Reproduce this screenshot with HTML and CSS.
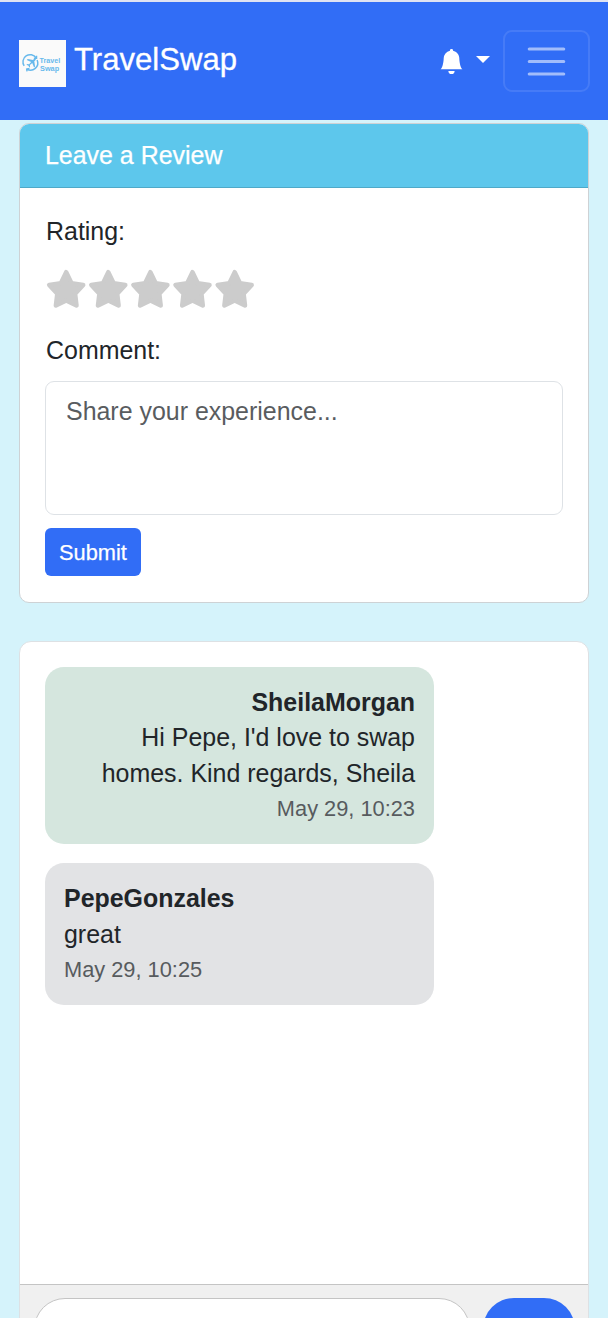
FILE: index.html
```html
<!DOCTYPE html>
<html lang="en">
<head>
<meta charset="utf-8">
<title>TravelSwap</title>
<link rel="stylesheet" href="styles.css">
</head>
<body>
<header class="navbar">
  <a class="brand">
    <svg class="logo" viewBox="0 0 48 48">
      <rect width="48" height="48" fill="#fafafa"/>
      <g fill="none" stroke="#67b9ec" stroke-width="1.500">
        <path d="M5.300 26.500A7.300 7.300 0 0 1 17.500 18.200M8 29.700A7.300 7.300 0 0 0 18.500 20.500"/>
        <path d="M15.200 18.600h2.700v-2.500M10.700 29.200l-2.800.5.3 2.300"/>
      </g>
      <path d="M17.200 19.200c-.9-.6-2 .2-2.800 1.100l-5.500-1-1 1 4.500 2.100-2.100 2.300-2-.3-.7.8 2.100 1 .8 2 .8-.7-.1-1.900 2.300-2 1.900 4.400 1-1-.8-5.200c.9-.8 2-1.800 1.600-2.600z" fill="#67b9ec"/>
      <text class="logo-text" x="21" y="23.600" textLength="21" lengthAdjust="spacingAndGlyphs">Travel</text>
      <text class="logo-text" x="21.500" y="31.200" textLength="19.500" lengthAdjust="spacingAndGlyphs">Swap</text>
    </svg>
    <span class="brand-name">TravelSwap</span>
  </a>
  <div class="nav-tools">
    <svg class="bell" viewBox="0 0 16 16" fill="#fff"><path d="M8 16a2 2 0 0 0 2-2H6a2 2 0 0 0 2 2m.995-14.901a1 1 0 1 0-1.990 0A5 5 0 0 0 3 6c0 1.098-.5 6-2 7h14c-1.500-1-2-5.902-2-7 0-2.420-1.720-4.440-4.005-4.901"/></svg>
    <span class="caret"></span>
    <button class="toggler" aria-label="Menu">
      <svg class="menu-icon" viewBox="0 0 30 30"><path d="M4 7h22M4 15h22M4 23h22" stroke="#fff" stroke-opacity=".55" stroke-width="2" stroke-linecap="round"/></svg>
    </button>
  </div>
</header>
<main class="content">
  <section class="card review">
    <div class="card-header">Leave a Review</div>
    <form class="card-body">
      <div class="label">Rating:</div>
      <svg class="stars" viewBox="0 0 212 42" fill="#ccc" stroke="#ccc" stroke-width="4.500" stroke-linejoin="round">
        <defs><path id="star" d="M21.200 4.200L26.500 15.200L38.200 17L30.100 25.800L31.500 37.500L21.200 32.500L10.900 37.500L12.300 25.800L4.200 17L15.900 15.200z"/></defs>
        <use href="#star"/><use href="#star" x="42.100"/><use href="#star" x="84.200"/><use href="#star" x="126.300"/><use href="#star" x="168.500"/>
      </svg>
      <div class="label">Comment:</div>
      <textarea class="comment" placeholder="Share your experience..."></textarea>
      <button class="submit" type="button">Submit</button>
    </form>
  </section>
  <section class="card chat">
    <div class="messages">
      <article class="message sent">
        <strong>SheilaMorgan</strong>
        <p class="text">Hi Pepe, I'd love to swap homes. Kind regards, Sheila</p>
        <time class="time">May 29, 10:23</time>
      </article>
      <article class="message">
        <strong>PepeGonzales</strong>
        <p class="text">great</p>
        <time class="time">May 29, 10:25</time>
      </article>
    </div>
    <div class="composer">
      <input class="message-input" aria-label="Message">
      <button class="send" aria-label="Send"></button>
    </div>
  </section>
</main>
</body>
</html>
```
FILE: styles.css
```css
* { box-sizing: border-box; }
body {
  margin: 0;
  height: 1318px;
  overflow: hidden;
  background: #d5f3fb;
  color: #212529;
  font: 24.94px/35.4px "Liberation Sans", Arial, sans-serif;
}
.navbar {
  height: 120px;
  padding: 4px 18px 0 19px;
  border-top: 2px solid #dfe3f2;
  background: #316df6;
  display: flex;
  justify-content: space-between;
  align-items: center;
}
.brand { display: flex; align-items: center; gap: 8px; padding-top: 1px; }
.logo { width: 47px; height: 47px; }
.logo-text { font: bold 6.8px/1 "Liberation Sans", sans-serif; fill: #67b9ec; }
.brand-name { color: #fff; font-size: 31.1px; line-height: 46px; padding-bottom: 8px; -webkit-text-stroke: .3px #fff; }
.nav-tools { display: flex; align-items: center; padding-bottom: 4px; }
.bell { width: 25px; height: 25px; }
.caret {
  margin: 0 13px 4px 12px;
  border: 7px solid transparent;
  border-top: 7.500px solid #fff;
  border-bottom: 0;
}
.toggler {
  width: 87px;
  height: 62px;
  padding: 0;
  border: 2px solid rgba(255,255,255,.1);
  border-radius: 9px;
  background: none;
  display: grid;
  place-items: center;
}
.menu-icon { width: 47px; height: 47px; }
.content { padding: 3px 19px 0; }
.card { background: #fff; border: 1px solid #ced2d5; border-radius: 10px; overflow: hidden; }
.review { height: 480px; }
.card-header {
  height: 64px;
  padding: 14px 25px 0;
  border-bottom: 1px solid #4ea9c8;
  background: #5dc7ec;
  color: #fff;
  -webkit-text-stroke: .25px #fff;
}
.card-body { padding: 26px 25px 0; display: flex; flex-direction: column; align-items: flex-start; }
.label { padding-left: 1px; }
.stars { width: 212px; height: 42px; margin: 19px 0 23px; }
.comment {
  width: 518px;
  height: 134px;
  margin-top: 12px;
  padding: 12px 20px;
  border: 1px solid #dee2e6;
  border-radius: 9px;
  font: inherit;
  resize: none;
}
.comment::placeholder { color: #595c5f; opacity: 1; }
.submit {
  width: 96px;
  height: 48px;
  margin-top: 13px;
  padding: 2px 0 0;
  border: 0;
  border-radius: 6px;
  background: #316df6;
  color: #fff;
  font: 21.8px "Liberation Sans", Arial, sans-serif;
  -webkit-text-stroke: .25px #fff;
}
.chat { margin-top: 38px; height: 760px; border-color: #dde1e4; border-radius: 12px; }
.messages {
  height: 643px;
  padding: 25px;
  border-bottom: 1px solid #c4c4c4;
  display: flex;
  flex-direction: column;
  align-items: flex-start;
  gap: 19px;
}
.message {
  width: 389px;
  padding: 18px 19px 17.600px;
  border-radius: 19px;
  background: #e2e3e5;
  display: flex;
  flex-direction: column;
}
.sent { background: #d5e6de; text-align: right; }
.text { margin: 0; }
.time { font-size: 21.8px; color: #575b5e; }
.composer { height: 116px; padding: 13px 13px 0 14px; background: #f0f0f0; display: flex; gap: 13px; }
.message-input { width: 437px; height: 62px; border: 1px solid #c4c4c4; border-radius: 31px; background: #fff; }
.send { width: 92px; height: 62px; border: 0; border-radius: 31px; background: #316df6; }
```
